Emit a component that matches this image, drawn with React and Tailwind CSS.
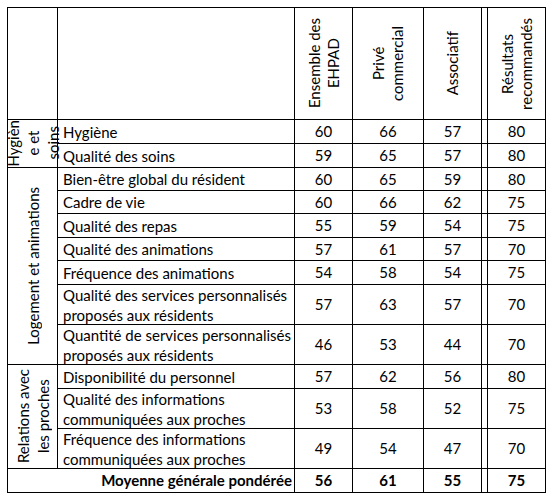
import React from "react";

const rows = [
  ["Hygiène", [60, 66, 57, 80]],
  ["Qualité des soins", [59, 65, 57, 80]],
  ["Bien-être global du résident", [60, 65, 59, 80]],
  ["Cadre de vie", [60, 66, 62, 75]],
  ["Qualité des repas", [55, 59, 54, 75]],
  ["Qualité des animations", [57, 61, 57, 70]],
  ["Fréquence des animations", [54, 58, 54, 75]],
  [["Qualité des services personnalisés", "proposés aux résidents"], [57, 63, 57, 70]],
  [["Quantité de services personnalisés", "proposés aux résidents"], [46, 53, 44, 70]],
  ["Disponibilité du personnel", [57, 62, 56, 80]],
  [["Qualité des informations", "communiquées aux proches"], [53, 58, 52, 75]],
  [["Fréquence des informations", "communiquées aux proches"], [49, 54, 47, 70]],
];

const cell = "border-r border-b border-black flex items-center";

function Vert({ lines, leading = "leading-[20px]" }) {
  return (
    <div className={`[writing-mode:vertical-rl] rotate-180 text-center whitespace-nowrap ${leading}`}>
      {lines.map((l, i) => (
        <div key={i}>{l}</div>
      ))}
    </div>
  );
}

function Group({ index }) {
  if (index === 0)
    return (
      <div className={`${cell} justify-center row-span-2 overflow-visible`}>
        <Vert lines={["Hygièn", "e et", "soins"]} />
      </div>
    );
  if (index === 2)
    return (
      <div className={`${cell} justify-center row-span-7`}>
        <Vert lines={["Logement et animations"]} />
      </div>
    );
  if (index === 9)
    return (
      <div className={`${cell} justify-center row-span-3`}>
        <Vert lines={["Relations avec", "les proches"]} />
      </div>
    );
  return null;
}

export default function App() {
  return (
    <div className="bg-white w-[552px] h-[500px] [font-family:Lato,sans-serif] text-[15px] text-black">
      <div className="ml-[7px] pt-[7px]">
        <div className="grid w-fit grid-cols-[50px_237px_58px_71px_58px_6px_58px] grid-rows-[112px_24px_24px_23px_23px_24px_23px_24px_40px_40px_24px_40px_40px_24px] border-l border-t border-black">
          <div className={cell}></div>
          <div className={cell}></div>
          <div className={`${cell} justify-center`}>
            <Vert lines={["Ensemble des", "EHPAD"]} leading="leading-[19px]" />
          </div>
          <div className={`${cell} justify-center`}>
            <Vert lines={["Privé", "commercial"]} leading="leading-[19px]" />
          </div>
          <div className={`${cell} justify-center`}>
            <Vert lines={["Associatif"]} leading="leading-[19px]" />
          </div>
          <div className={cell}></div>
          <div className={`${cell} justify-center`}>
            <Vert lines={["Résultats", "recommandés"]} leading="leading-[19px]" />
          </div>

          {rows.map(([label, vals], i) => (
            <React.Fragment key={i}>
              <Group index={i} />
              <div className={`${cell} col-start-2 pl-[5px] leading-[20px]`}>
                {Array.isArray(label) ? (
                  <div>
                    <div>{label[0]}</div>
                    <div>{label[1]}</div>
                  </div>
                ) : (
                  <div>{label}</div>
                )}
              </div>
              <div className={`${cell} justify-center`}>{vals[0]}</div>
              <div className={`${cell} justify-center`}>{vals[1]}</div>
              <div className={`${cell} justify-center`}>{vals[2]}</div>
              <div className={cell}></div>
              <div className={`${cell} justify-center`}>{vals[3]}</div>
            </React.Fragment>
          ))}

          <div className={`${cell} col-span-2 justify-end pr-[2px] font-bold`}>Moyenne générale pondérée</div>
          <div className={`${cell} justify-center font-bold`}>56</div>
          <div className={`${cell} justify-center font-bold`}>61</div>
          <div className={`${cell} justify-center font-bold`}>55</div>
          <div className={cell}></div>
          <div className={`${cell} justify-center font-bold`}>75</div>
        </div>
      </div>
    </div>
  );
}
